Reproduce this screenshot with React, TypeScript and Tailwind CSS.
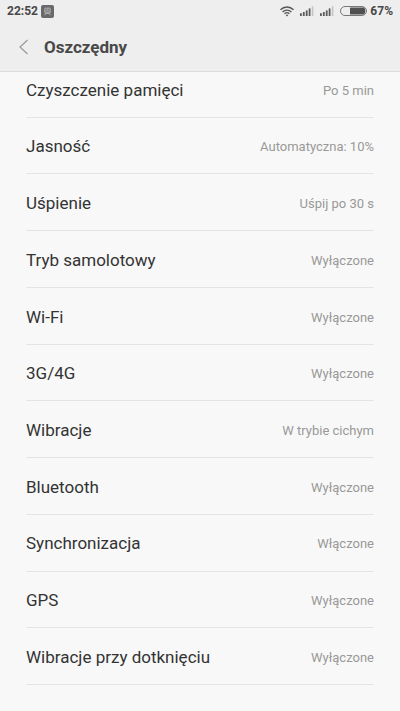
const settings = [
  { name: "Czyszczenie pamięci", value: "Po 5 min" },
  { name: "Jasność", value: "Automatyczna: 10%" },
  { name: "Uśpienie", value: "Uśpij po 30 s" },
  { name: "Tryb samolotowy", value: "Wyłączone" },
  { name: "Wi-Fi", value: "Wyłączone" },
  { name: "3G/4G", value: "Wyłączone" },
  { name: "Wibracje", value: "W trybie cichym" },
  { name: "Bluetooth", value: "Wyłączone" },
  { name: "Synchronizacja", value: "Włączone" },
  { name: "GPS", value: "Wyłączone" },
  { name: "Wibracje przy dotknięciu", value: "Wyłączone" },
];

function NotificationIcon() {
  return (
    <svg width="13" height="13" viewBox="0 0 13 13" fill="none" aria-hidden="true">
      <rect width="13" height="13" rx="2" fill="#69696b" />
      <rect x="3.8" y="3.2" width="5.4" height="4.8" rx="0.5" stroke="#c8c8c8" strokeWidth="0.8" />
      <path d="M4 6h5M3.5 10.2l1.5-2h3l1.5 2M5.5 4.6h2" stroke="#c0c0c0" strokeWidth="0.8" />
    </svg>
  );
}

function WifiIcon() {
  return (
    <svg width="14" height="11" viewBox="0 0 14 11" fill="none" stroke="#555" aria-hidden="true">
      <path d="M0.5 3.8C4.2 0.1 9.8 0.1 13.5 3.8" strokeWidth="1.4" />
      <path d="M2.6 5.9C5.1 3.5 8.9 3.5 11.4 5.9" strokeWidth="1.4" />
      <path d="M4.6 7.8C6 6.5 8 6.5 9.4 7.8" strokeWidth="1.3" />
      <path d="M5.7 9L7 10.5 8.3 9Q7 8.1 5.7 9Z" fill="#555" stroke="none" />
    </svg>
  );
}

function SignalIcon() {
  return (
    <svg width="14" height="10" viewBox="0 0 14 10" fill="#5c5c5c" aria-hidden="true">
      <rect x="0" y="7.2" width="1.8" height="2.8" />
      <rect x="2.9" y="6" width="1.8" height="4" />
      <rect x="5.8" y="4.4" width="1.8" height="5.6" />
      <rect x="8.7" y="2.4" width="1.8" height="7.6" />
      <rect x="11.8" y="0.4" width="1.6" height="9.6" fill="#c4c4c4" />
    </svg>
  );
}

function BatteryIcon() {
  return (
    <svg width="27" height="10" viewBox="0 0 27 10" fill="none" aria-hidden="true">
      <rect x="0.5" y="0.5" width="26" height="9" rx="4.5" stroke="#777" />
      <path d="M10 1.6H24Q25.4 3 25.4 5T24 8.4H10Z" fill="#505050" />
    </svg>
  );
}

export default function App() {
  return (
    <div className="flex min-h-screen flex-col bg-[#f8f8f8] font-['Roboto',sans-serif]">
      <header className="z-10 border-b border-[#dcdcdc] bg-[#eeeeee] text-[#484848]">
        <div className="flex h-[22px] items-center justify-between px-[7px] text-[12px] font-bold leading-none">
          <div className="flex items-center gap-[3px]">
            <span>22:52</span>
            <NotificationIcon />
          </div>
          <div className="flex items-center gap-[3px]">
            <div className="flex items-center gap-[6px]">
              <WifiIcon />
              <SignalIcon />
              <SignalIcon />
              <BatteryIcon />
            </div>
            <span>67%</span>
          </div>
        </div>
        <div className="flex h-[49px] items-center pl-[18px]">
          <button type="button" aria-label="Wstecz" className="flex w-[26px] items-center">
            <svg width="11" height="16" viewBox="0 0 11 16" fill="none" stroke="#999" aria-hidden="true">
              <path d="M9.5 1L2 8l7.5 7" strokeWidth="1.2" />
            </svg>
          </button>
          <h1 className="pt-[2px] text-[17px] font-bold">Oszczędny</h1>
        </div>
      </header>
      <main className="-mt-[11px] flex flex-1 flex-col px-[26px] pb-[26px]">
        <ul className="flex flex-1 flex-col">
          {settings.map((s) => (
            <li key={s.name} className="flex flex-1 border-b border-[#e4e4e4]">
              <button type="button" className="flex flex-1 items-center justify-between pt-[3px] text-left">
                <span className="text-[17px] text-[#333333]">{s.name}</span>
                <span className="text-[13px] text-[#999999]">{s.value}</span>
              </button>
            </li>
          ))}
        </ul>
      </main>
    </div>
  );
}
